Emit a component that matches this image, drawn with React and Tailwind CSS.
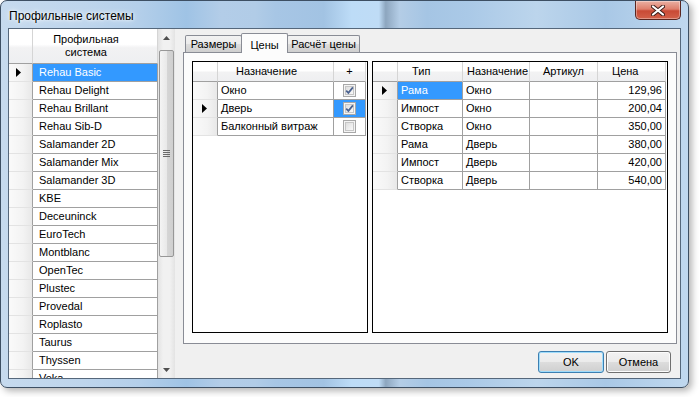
import React from 'react';

const systems = [
  'Rehau Basic', 'Rehau Delight', 'Rehau Brillant', 'Rehau Sib-D', 'Salamander 2D',
  'Salamander Mix', 'Salamander 3D', 'KBE', 'Deceuninck', 'EuroTech', 'Montblanc',
  'OpenTec', 'Plustec', 'Provedal', 'Roplasto', 'Taurus', 'Thyssen', 'Veka',
];

const purposes = [
  { name: 'Окно', checked: true },
  { name: 'Дверь', checked: true, current: true },
  { name: 'Балконный витраж', checked: false },
];

const prices = [
  ['Рама', 'Окно', '129,96'],
  ['Импост', 'Окно', '200,04'],
  ['Створка', 'Окно', '350,00'],
  ['Рама', 'Дверь', '380,00'],
  ['Импост', 'Дверь', '420,00'],
  ['Створка', 'Дверь', '540,00'],
];

const Arrow = () => (
  <svg width="5" height="9" viewBox="0 0 5 9">
    <path d="M0 0L5 4.5L0 9Z" fill="#000" />
  </svg>
);

const RowHead = ({ current, className = '' }) => (
  <div className={`h-full shrink-0 flex items-center border-b border-r border-b-[#e3e3e3] border-r-[#a0a0a0] bg-[linear-gradient(90deg,#fafafa,#f3f3f3_60%,#e8e8e8)] ${className}`}>
    {current && <Arrow />}
  </div>
);

const HeadCell = ({ className = '', children }) => (
  <div className={`h-full shrink-0 flex items-center border-r border-b border-r-[#d5d5d5] border-b-[#a0a0a0] bg-[linear-gradient(180deg,#ffffff,#ffffff_45%,#f2f2f3_55%,#eeeff1)] ${className}`}>
    {children}
  </div>
);

const Cell = ({ className = '', selected, children }) => (
  <div className={`h-full shrink-0 flex items-center overflow-hidden whitespace-nowrap border-r border-b border-[#a0a0a0] ${selected ? 'bg-[#3399ff] text-white' : 'bg-white'} ${className}`}>
    {children}
  </div>
);

const CheckBox = ({ checked }) => (
  <svg width="13" height="13" viewBox="0 0 13 13">
    <defs>
      <linearGradient id="cbg" x1="0" y1="0" x2="1" y2="1">
        <stop offset="0" stopColor="#dcdcdc" />
        <stop offset="1" stopColor="#fbfbfb" />
      </linearGradient>
    </defs>
    <rect x="0.5" y="0.5" width="12" height="12" fill="#f4f4f4" stroke="#a8a8a8" />
    <rect x="2.5" y="2.5" width="8" height="8" fill="url(#cbg)" stroke="#c6c6c6" />
    {checked && (
      <path d="M3.2 6.6L5.4 8.9L9.9 3.4" fill="none" stroke="#4c6390" strokeWidth="1.7" />
    )}
  </svg>
);

const ScrollBar = () => (
  <div className="w-[17px] h-full shrink-0 flex flex-col bg-[linear-gradient(90deg,#e3e3e3,#f1f1f1_30%,#f1f1f1_70%,#e3e3e3)]">
    <div className="h-[17px] shrink-0 flex items-center justify-center">
      <svg width="7" height="4" viewBox="0 0 7 4"><path d="M0 4L3.5 0L7 4Z" fill="#4f4f4f" /></svg>
    </div>
    <div className="mt-[4px] mx-[1px] h-[207px] shrink-0 rounded-[2px] border border-[#979797] bg-[linear-gradient(90deg,#f4f4f4,#e9e9e9_50%,#d6d6d6_51%,#cfcfcf)] flex flex-col items-center justify-center gap-[1px]">
      <div className="w-[7px] h-px bg-[#6b6b6b]" />
      <div className="w-[7px] h-px bg-[#6b6b6b]" />
      <div className="w-[7px] h-px bg-[#6b6b6b]" />
      <div className="w-[7px] h-px bg-[#6b6b6b]" />
    </div>
    <div className="flex-1 min-h-0" />
    <div className="h-[17px] shrink-0 flex items-center justify-center">
      <svg width="7" height="4" viewBox="0 0 7 4"><path d="M0 0L3.5 4L7 0Z" fill="#4f4f4f" /></svg>
    </div>
  </div>
);

const SystemsGrid = () => (
  <div className="w-[166px] h-full min-h-0 shrink-0 flex overflow-hidden bg-white">
    <div className="w-[149px] h-full min-h-0 flex flex-col overflow-hidden">
      <div className="h-[35px] shrink-0 flex">
        <HeadCell className="w-[24px] border-r-[#a0a0a0]" />
        <HeadCell className="w-[125px] justify-center pr-[18px] border-r-[#a0a0a0]">
          <div className="text-center leading-[13px]">
            Профильная<br />система
          </div>
        </HeadCell>
      </div>
      {systems.map((name, i) => (
        <div key={name} className="h-[18px] shrink-0 flex">
          <RowHead current={i === 0} className="w-[24px] pl-[7px]" />
          <Cell className="w-[125px] pl-[6px]" selected={i === 0}>{name}</Cell>
        </div>
      ))}
    </div>
    <ScrollBar />
  </div>
);

const PurposeGrid = () => (
  <div className="w-[176px] h-full shrink-0 border border-black bg-white flex flex-col overflow-hidden">
    <div className="h-[20px] shrink-0 flex">
      <HeadCell className="w-[25px] border-r-[#a0a0a0]" />
      <HeadCell className="w-[116px] justify-center pr-[18px]">Назначение</HeadCell>
      <HeadCell className="w-[32px] justify-center">+</HeadCell>
    </div>
    {purposes.map((p) => (
      <div key={p.name} className="h-[18px] shrink-0 flex">
        <RowHead current={p.current} className="w-[25px] pl-[9px]" />
        <Cell className="w-[116px] pl-[3px]">{p.name}</Cell>
        <Cell className="w-[32px] justify-center" selected={p.current}>
          <CheckBox checked={p.checked} />
        </Cell>
      </div>
    ))}
  </div>
);

const PriceGrid = () => (
  <div className="w-[296px] h-full shrink-0 border border-black bg-white flex flex-col overflow-hidden">
    <div className="h-[20px] shrink-0 flex">
      <HeadCell className="w-[25px] border-r-[#a0a0a0]" />
      <HeadCell className="w-[65px] pl-[14px]">Тип</HeadCell>
      <HeadCell className="w-[67px] pl-[4px]">Назначение</HeadCell>
      <HeadCell className="w-[68px] justify-center">Артикул</HeadCell>
      <HeadCell className="w-[68px] pl-[14px]">Цена</HeadCell>
    </div>
    {prices.map(([type, purpose, price], i) => (
      <div key={i} className="h-[18px] shrink-0 flex">
        <RowHead current={i === 0} className="w-[25px] pl-[9px]" />
        <Cell className="w-[65px] pl-[3px]" selected={i === 0}>{type}</Cell>
        <Cell className="w-[67px] pl-[3px]">{purpose}</Cell>
        <Cell className="w-[68px]" />
        <Cell className="w-[68px] justify-end pr-[3px]">{price}</Cell>
      </div>
    ))}
  </div>
);

const Tabs = () => (
  <div className="h-[19px] shrink-0 flex items-end pl-[2px]">
    <div className="w-[57px] h-[17px] flex items-center justify-center border border-b-0 border-[#898c95] rounded-t-[2px] bg-[linear-gradient(180deg,#f2f2f2,#ebebeb_50%,#dddddd_51%,#cfcfcf)]">
      Размеры
    </div>
    <div className="relative z-10 -ml-px w-[47px] h-[20px] -mb-px flex items-start pt-[3px] justify-center border border-b-0 border-[#898c95] rounded-t-[2px] bg-[#fcfcfc]">
      Цены
    </div>
    <div className="-ml-px w-[73px] h-[17px] flex items-center justify-center border border-b-0 border-[#898c95] rounded-t-[2px] bg-[linear-gradient(180deg,#f2f2f2,#ebebeb_50%,#dddddd_51%,#cfcfcf)]">
      Расчёт цены
    </div>
  </div>
);

const CloseButton = () => (
  <div className="w-[46px] h-[19px] mr-[7px] shrink-0 rounded-b-[5px] border border-t-0 border-[#5a2620] bg-[linear-gradient(180deg,#eab0a3,#de7f6c_45%,#c94a35_55%,#d3614a)] shadow-[inset_0_0_0_1px_rgba(255,255,255,0.35)] flex items-center justify-center">
    <svg width="14" height="11" viewBox="0 0 14 11">
      <path d="M2 1.5L12 9.5M12 1.5L2 9.5" stroke="#3b1c18" strokeWidth="4" strokeLinecap="round" />
      <path d="M2 1.5L12 9.5M12 1.5L2 9.5" stroke="#ffffff" strokeWidth="2.2" strokeLinecap="round" />
    </svg>
  </div>
);

export default function App() {
  return (
    <div className="w-[699px] h-[397px] bg-white overflow-hidden font-['Liberation_Sans',Arial,sans-serif] text-[11px] text-black">
      <div className="w-[689px] h-[388px] rounded-[7px] border border-[#3d4f63] shadow-[3px_3px_7px_rgba(0,0,0,0.3)] overflow-hidden flex flex-col bg-[linear-gradient(90deg,#c6daee_0%,#bed5ec_12%,#b4cfea_20%,#9fc3e5_27%,#b3cde8_32%,#b1cce7_37%,#a7c6e5_40%,#a2c3e3_47%,#bddcf7_51%,#bfdcf6_55%,#8da6bf_56%,#b4cde6_58%,#a5c5e4_62%,#aac9e7_68%,#bcd5ec_78%,#a9c8e6_88%,#c0d8ef_100%)]">
        <div className="h-[27px] shrink-0 flex items-start">
          <div className="pl-[8px] pt-[6px] text-[12px] [text-shadow:0_0_6px_#ffffff,0_0_3px_#ffffff]">
            Профильные системы
          </div>
          <div className="flex-1" />
          <CloseButton />
        </div>
        <div className="flex-1 min-h-0 overflow-hidden px-[7px] pb-[8px] flex">
          <div className="flex-1 min-h-0 border border-[#55677b] bg-[#f0f0f0] flex overflow-hidden">
            <SystemsGrid />
            <div className="ml-[8px] w-[494px] shrink-0 flex flex-col pt-[4px]">
              <Tabs />
              <div className="h-[292px] shrink-0 border border-[#898c95] bg-[#fcfcfc] flex gap-[4px] pt-[8px] pl-[8px]">
                <div className="h-[272px] flex">
                  <PurposeGrid />
                </div>
                <div className="h-[272px] flex">
                  <PriceGrid />
                </div>
              </div>
              <div className="mt-[7px] flex justify-end gap-[2px] pr-[6px]">
                <button className="w-[66px] h-[22px] rounded-[3px] border border-[#3c7fb1] shadow-[inset_0_0_0_1px_#9fdcfb] bg-[linear-gradient(180deg,#f2f2f2,#ebebeb_50%,#dddddd_51%,#cfcfcf)] text-[11px]">
                  OK
                </button>
                <button className="w-[65px] h-[22px] rounded-[3px] border border-[#707070] shadow-[inset_0_0_0_1px_#fcfcfc] bg-[linear-gradient(180deg,#f2f2f2,#ebebeb_50%,#dddddd_51%,#cfcfcf)] text-[11px]">
                  Отмена
                </button>
              </div>
            </div>
          </div>
        </div>
      </div>
    </div>
  );
}
